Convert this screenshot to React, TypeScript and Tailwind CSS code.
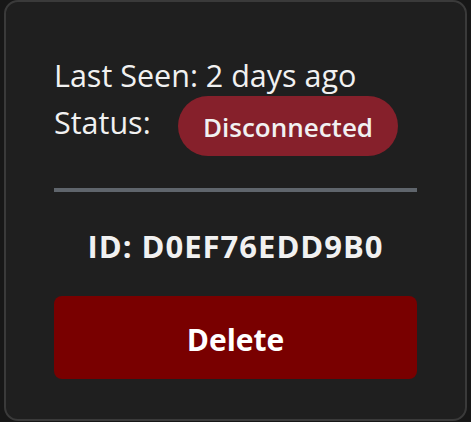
export default function App() {
  return (
    <div className="min-h-screen bg-[#171717] px-[4px]" style={{ fontFamily: '"Open Sans", "Noto Sans", sans-serif' }}>
      <div className="h-[421px] w-[463px] rounded-[14px] border-2 border-[#3a3a3a] bg-[#1f1f1f] px-[48px] pt-[50px] text-[#f1f1f1]">
        {/* Device info */}
        <p className="text-[30.5px] leading-[47px]">Last Seen: 2 days ago</p>
        <div className="flex items-start">
          <span className="w-[124px] text-[30.5px] leading-[47px]">Status:</span>
          <span className="mt-[-3px] flex h-[60px] w-[220px] items-center justify-center rounded-full bg-[#86202b] pt-[2px] text-[26px] font-semibold">
            Disconnected
          </span>
        </div>

        <hr className="mt-[32px] h-[4px] border-0 bg-[#5f656c]" />

        <p className="mt-[36px] text-center text-[31px] font-bold leading-[36px] tracking-[1px]">ID: D0EF76EDD9B0</p>

        <button className="mt-[32px] flex h-[83px] w-full items-center justify-center rounded-[8px] bg-[#790000] pt-[4px] text-[30px] font-bold text-white">
          Delete
        </button>
      </div>
    </div>
  );
}
